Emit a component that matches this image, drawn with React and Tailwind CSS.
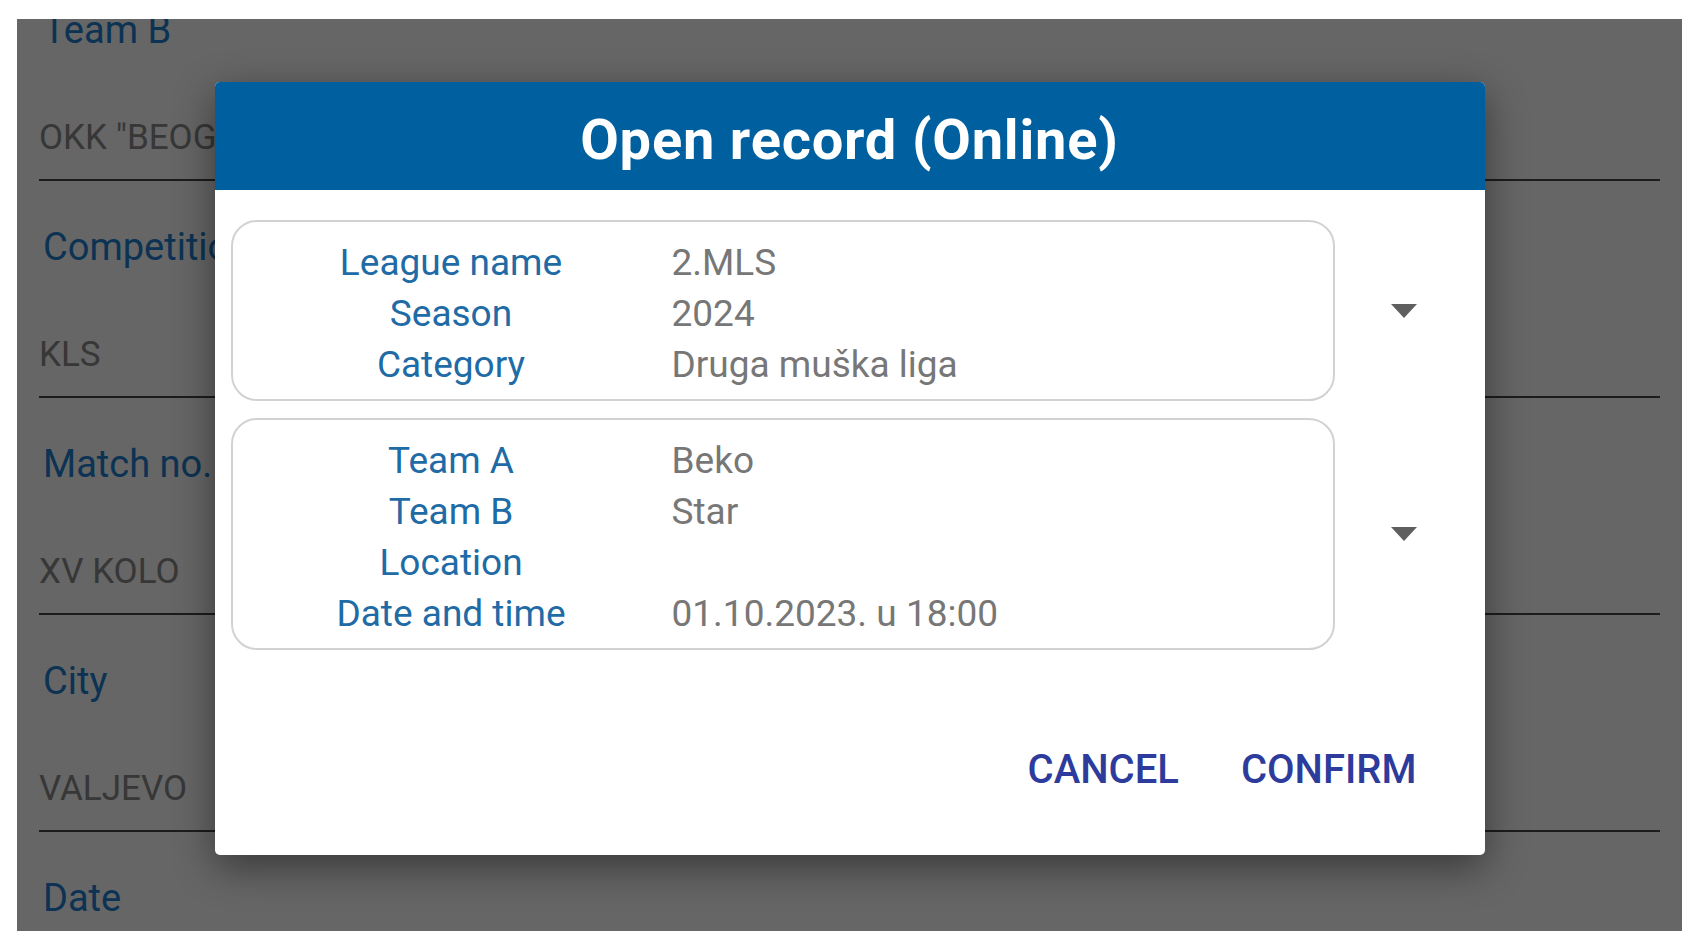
import React from "react";

const formFields = [
  { label: "Team B", value: 'OKK "BEOGRAD"' },
  { label: "Competition", value: "KLS" },
  { label: "Match no.", value: "XV KOLO" },
  { label: "City", value: "VALJEVO" },
  { label: "Date", value: "01.10.2023." },
];

const leagueRows = [
  ["League name", "2.MLS"],
  ["Season", "2024"],
  ["Category", "Druga muška liga"],
];

const matchRows = [
  ["Team A", "Beko"],
  ["Team B", "Star"],
  ["Location", ""],
  ["Date and time", "01.10.2023. u 18:00"],
];

const Caret = () => (
  <svg width="26" height="14" viewBox="0 0 26 14">
    <polygon points="0,0 26,0 13,14" fill="#5f5f5f" />
  </svg>
);

const InfoBox = ({ rows }) => (
  <div className="flex items-center">
    <div className="flex-1 rounded-[26px] border-2 border-[#d2d2d2] pt-[13px] pb-[11px]">
      {rows.map(([label, value]) => (
        <div key={label} className="grid grid-cols-[437px_1fr] h-[51px] items-center">
          <span className="text-center text-[#1e6ba6]">{label}</span>
          <span className="pl-[2px] text-[#777777]">{value}</span>
        </div>
      ))}
    </div>
    <div className="w-[150px] pr-[12px] flex justify-center">
      <Caret />
    </div>
  </div>
);

export default function App() {
  return (
    <div
      className="w-[1704px] h-[945px] bg-white pl-[17px] pt-[19px]"
      style={{ fontFamily: "Roboto, 'Noto Sans', sans-serif" }}
    >
      <div className="relative w-[1665px] h-[912px] overflow-hidden bg-white">
        {/* form behind the dialog */}
        <div className="px-[22px] -mt-[55px]">
          {formFields.map((f) => (
            <div key={f.label} className="pt-[36px] pb-[11px] border-b-2 border-[#474747]">
              <div className="h-[60px] flex items-center pl-1 text-[38px] text-[#2080cf]">{f.label}</div>
              <div className="h-[60px] mt-[48px] flex items-center text-[35px] text-[#8a8a8a]">{f.value}</div>
            </div>
          ))}
        </div>

        {/* scrim */}
        <div className="absolute inset-0 bg-black/60" />

        {/* dialog */}
        <div className="absolute inset-0 flex justify-center items-start pt-[63px]">
          <div className="w-[1270px] bg-white rounded-[5px] shadow-[0_12px_40px_rgba(0,0,0,0.45)] overflow-hidden">
            <div className="h-[108px] bg-[#005f9f] flex items-center justify-center pt-[8px]">
              <h1 className="text-white font-bold text-[56px] leading-none tracking-[0.8px]">Open record (Online)</h1>
            </div>
            <div className="pl-4 pt-[30px] text-[37px]">
              <div className="flex flex-col gap-[17px]">
                <InfoBox rows={leagueRows} />
                <InfoBox rows={matchRows} />
              </div>
              <div className="mt-[90px] mb-[55px] h-[60px] flex justify-end items-center gap-[30px] pr-[52px]">
                <button className="px-4 h-full text-[40px] font-medium text-[#2d3c9c] uppercase">Cancel</button>
                <button className="px-4 h-full text-[40px] font-medium text-[#2d3c9c] uppercase">Confirm</button>
              </div>
            </div>
          </div>
        </div>
      </div>
    </div>
  );
}
